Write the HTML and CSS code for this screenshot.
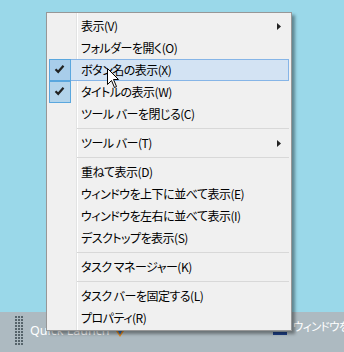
FILE: index.html
```html
<!DOCTYPE html>
<html lang="ja">
<head>
<meta charset="utf-8">
<link rel="stylesheet" href="styles.css">
</head>
<body>
<div class="screen">
  <div class="desktop"></div>
  <div class="taskbar">
    <svg class="grip" width="8" height="30" viewBox="0 0 8 30">
      <defs>
        <pattern id="dots" width="3" height="3" patternUnits="userSpaceOnUse">
          <rect x="0" y="0" width="2" height="2" fill="#56646b"/>
        </pattern>
      </defs>
      <rect x="0" y="0" width="8" height="30" fill="url(#dots)"/>
    </svg>
    <span class="ql">Quick Launch</span>
    <svg class="ql-icon" width="10" height="10" viewBox="0 0 10 10">
      <path d="M1 2 L5 8 L9 2 Z" fill="#e88a1a"/>
      <path d="M3 2 L5 6 L7 2 Z" fill="#2a6fc4"/>
    </svg>
    <span class="tb-line"></span>
    <span class="tb-text">ウィンドウを</span>
  </div>

  <div class="menu">
    <div class="item"><span class="chk"></span><span class="label">表示(V)</span><svg class="arrow" width="4" height="7" viewBox="0 0 4 7"><path d="M0 0 L4 3.5 L0 7 Z" fill="#222"/></svg></div>
    <div class="item"><span class="chk"></span><span class="label">フォルダーを開く(O)</span></div>
    <div class="item hot"><span class="chk on hot-chk"><svg width="22" height="22" viewBox="0 0 22 22"><path d="M6.5 10.2 L9.2 12.8 L14.5 6.8" fill="none" stroke="#222" stroke-width="2.2"/></svg></span><span class="label">ボタン名の表示(X)</span></div>
    <div class="item"><span class="chk on"><svg width="22" height="22" viewBox="0 0 22 22"><path d="M6.5 10.2 L9.2 12.8 L14.5 6.8" fill="none" stroke="#222" stroke-width="2.2"/></svg></span><span class="label">タイトルの表示(W)</span></div>
    <div class="item"><span class="chk"></span><span class="label">ツール バーを閉じる(C)</span></div>
    <div class="sep"></div>
    <div class="item"><span class="chk"></span><span class="label">ツール バー(T)</span><svg class="arrow" width="4" height="7" viewBox="0 0 4 7"><path d="M0 0 L4 3.5 L0 7 Z" fill="#222"/></svg></div>
    <div class="sep"></div>
    <div class="item"><span class="chk"></span><span class="label">重ねて表示(D)</span></div>
    <div class="item"><span class="chk"></span><span class="label">ウィンドウを上下に並べて表示(E)</span></div>
    <div class="item"><span class="chk"></span><span class="label">ウィンドウを左右に並べて表示(I)</span></div>
    <div class="item"><span class="chk"></span><span class="label">デスクトップを表示(S)</span></div>
    <div class="sep"></div>
    <div class="item"><span class="chk"></span><span class="label">タスク マネージャー(K)</span></div>
    <div class="sep"></div>
    <div class="item"><span class="chk"></span><span class="label">タスク バーを固定する(L)</span></div>
    <div class="item"><span class="chk"></span><span class="label">プロパティ(R)</span></div>
  </div>

  <svg class="cursor" width="13" height="21" viewBox="0 0 13 21">
    <path d="M0.5 0.5 L0.5 16.5 L4.5 12.5 L7.5 19.5 L9.5 18.5 L6.5 11.5 L11.5 11.5 Z" fill="#fff" stroke="#000" stroke-width="1" stroke-linejoin="miter"/>
  </svg>
</div>
</body>
</html>
```

FILE: styles.css
```css
* { box-sizing: border-box; }
html, body { margin: 0; padding: 0; }
body {
  width: 344px;
  height: 352px;
  overflow: hidden;
  background: #9ad8e9;
}
.screen {
  position: relative;
  width: 344px;
  height: 352px;
  display: flex;
  flex-direction: column;
}
.desktop {
  height: 312px;
  background: #9ad8e9;
}
.taskbar {
  height: 40px;
  background: #adbac1;
  display: flex;
  align-items: flex-start;
  padding-left: 15px;
  font-family: "Noto Sans", "Noto Sans CJK JP", sans-serif;
  color: #fff;
  overflow: hidden;
}
.grip {
  margin-top: 4px;
  flex: none;
}
.ql {
  margin-left: 7px;
  margin-top: 11px;
  font-size: 12.5px;
  line-height: 16px;
  white-space: nowrap;
}
.ql-icon {
  margin-left: 6px;
  margin-top: 17px;
  flex: none;
}
.tb-line {
  margin-left: auto;
  margin-top: 20px;
  width: 14px;
  height: 3px;
  background: #1d3f86;
  flex: none;
}
.tb-text {
  margin-left: 6px;
  margin-top: 6px;
  width: 51px;
  flex: none;
  white-space: nowrap;
  font-family: "Noto Sans CJK JP", sans-serif;
  font-feature-settings: "palt";
  font-size: 11.5px;
  letter-spacing: -0.6px;
  line-height: 16px;
}

.menu {
  position: absolute;
  left: 46px;
  top: 12px;
  width: 246px;
  height: 319px;
  border: 1px solid #979797;
  padding: 2px 2px 1px 2px;
  background: linear-gradient(to right, #f0f0f0 29px, #e2e3e3 29px, #e2e3e3 30px, #ffffff 30px, #ffffff 31px, #f0f0f0 31px);
  box-shadow: 3px 3px 3px rgba(0, 0, 0, 0.38);
  font-family: "Noto Sans CJK JP", sans-serif;
  font-feature-settings: "palt";
  font-size: 12px;
  color: #000;
}
.item {
  height: 22px;
  display: grid;
  grid-template-columns: 22px 1fr auto;
  column-gap: 10px;
  align-items: center;
  padding-right: 8px;
}
.item.hot {
  background: #d3e3f3;
  box-shadow: inset 0 0 0 1px #86b5e7;
}
.chk {
  width: 22px;
  height: 22px;
  display: block;
}
.chk svg { display: block; }
.chk.on {
  background: #b3d4eb;
  box-shadow: inset 0 0 0 1px #5aa7de;
}
.chk.hot-chk {
  background: #a8cdea;
}
.label {
  white-space: nowrap;
  line-height: 22px;
  letter-spacing: -0.5px;
}
.arrow { display: block; }
.sep {
  height: 7px;
  padding-top: 3px;
  margin-left: 28px;
}
.sep::before {
  content: "";
  display: block;
  height: 1px;
  background: #d8d8d8;
}
.cursor {
  position: absolute;
  left: 107px;
  top: 68px;
}
```
